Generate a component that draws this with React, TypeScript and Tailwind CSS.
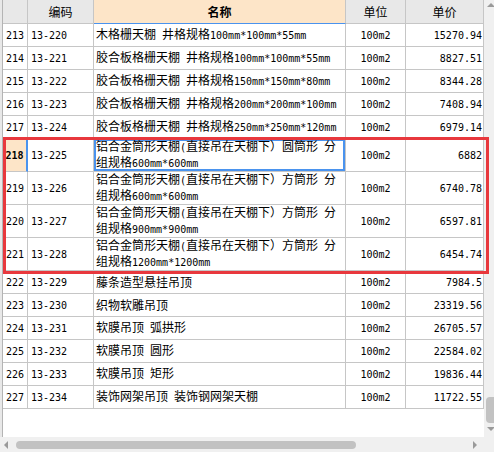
import React from "react";

type Row = {
  no: number;
  code: string;
  name: string[];
  unit: string;
  price: string;
};

const rows: Row[] = [
  { no: 213, code: "13-220", name: ["木格栅天棚 井格规格100mm*100mm*55mm"], unit: "100m2", price: "15270.94" },
  { no: 214, code: "13-221", name: ["胶合板格栅天棚 井格规格100mm*100mm*55mm"], unit: "100m2", price: "8827.51" },
  { no: 215, code: "13-222", name: ["胶合板格栅天棚 井格规格150mm*150mm*80mm"], unit: "100m2", price: "8344.28" },
  { no: 216, code: "13-223", name: ["胶合板格栅天棚 井格规格200mm*200mm*100mm"], unit: "100m2", price: "7408.94" },
  { no: 217, code: "13-224", name: ["胶合板格栅天棚 井格规格250mm*250mm*120mm"], unit: "100m2", price: "6979.14" },
  { no: 218, code: "13-225", name: ["铝合金筒形天棚(直接吊在天棚下）圆筒形 分", "组规格600mm*600mm"], unit: "100m2", price: "6882" },
  { no: 219, code: "13-226", name: ["铝合金筒形天棚(直接吊在天棚下）方筒形 分", "组规格600mm*600mm"], unit: "100m2", price: "6740.78" },
  { no: 220, code: "13-227", name: ["铝合金筒形天棚(直接吊在天棚下）方筒形 分", "组规格900mm*900mm"], unit: "100m2", price: "6597.81" },
  { no: 221, code: "13-228", name: ["铝合金筒形天棚(直接吊在天棚下）方筒形 分", "组规格1200mm*1200mm"], unit: "100m2", price: "6454.74" },
  { no: 222, code: "13-229", name: ["藤条造型悬挂吊顶"], unit: "100m2", price: "7984.5" },
  { no: 223, code: "13-230", name: ["织物软雕吊顶"], unit: "100m2", price: "23319.56" },
  { no: 224, code: "13-231", name: ["软膜吊顶 弧拱形"], unit: "100m2", price: "26705.57" },
  { no: 225, code: "13-232", name: ["软膜吊顶 圆形"], unit: "100m2", price: "22584.02" },
  { no: 226, code: "13-233", name: ["软膜吊顶 矩形"], unit: "100m2", price: "19836.44" },
  { no: 227, code: "13-234", name: ["装饰网架吊顶 装饰钢网架天棚"], unit: "100m2", price: "11722.55" },
];

const SELECTED = 218;

// ascii runs get the narrow mono face so they take half a CJK cell, like the original
function Mixed({ text }: { text: string }) {
  const parts = text.split(/([\x20-\x7e]+)/);
  return (
    <>
      {parts.map((p, i) =>
        i % 2 === 1 ? (
          <span key={i} className="font-['DejaVu_Sans_Mono',monospace] text-[10px] whitespace-pre">
            {p}
          </span>
        ) : (
          <span key={i}>{p}</span>
        )
      )}
    </>
  );
}

function Tri({ dir }: { dir: "up" | "down" | "left" | "right" }) {
  const pts = {
    up: "0,5 4,1 8,5",
    down: "0,1 8,1 4,5",
    left: "5,0 5,8 1,4",
    right: "1,0 1,8 5,4",
  }[dir];
  const vertical = dir === "up" || dir === "down";
  return (
    <svg width={vertical ? 8 : 6} height={vertical ? 6 : 8} viewBox={vertical ? "0 0 8 6" : "0 0 6 8"}>
      <polygon points={pts} fill="#9a9a9a" />
    </svg>
  );
}

export default function App() {
  const mono = "font-['DejaVu_Sans_Mono',monospace] text-[10px]";
  const cjk = "font-['Noto_Sans_CJK_SC',sans-serif] text-[12px]";
  const line = "border-[#c6c6c6]";

  return (
    <div className="relative w-[494px] h-[452px] bg-white text-black overflow-hidden flex flex-col">
      <div className="flex h-[437px]">
        {/* left frame edge */}
        <div className="w-[3px] bg-[#e8e8e8] border-r border-[#b4b4b4]" />

        {/* grid */}
        <div className="w-[481px] flex flex-col">
          <div className={`flex h-[24px] ${cjk}`}>
            <div className={`w-[25px] bg-[#e8e8e8] border-r border-b ${line}`} />
            <div className={`w-[66px] bg-[#e8e8e8] border-r border-b ${line} flex items-center justify-center`}>编码</div>
            <div className={`w-[252px] bg-[#fde5c8] border-r ${line} border-b border-b-[#4a93ee] flex items-center justify-center font-bold`}>
              名称
            </div>
            <div className={`w-[60px] bg-[#e8e8e8] border-r border-b ${line} flex items-center justify-center`}>单位</div>
            <div className={`w-[78px] bg-[#e8e8e8] border-r border-b ${line} flex items-center justify-center`}>单价</div>
          </div>

          {rows.map((r) => {
            const sel = r.no === SELECTED;
            const h = r.name.length > 1 ? "h-[33px]" : "h-[23px]";
            return (
              <div key={r.no} className={`flex ${h}`}>
                <div
                  className={`w-[25px] border-b ${line} flex items-center justify-center ${mono} ${
                    sel ? "bg-[#fde5c8] border-r-2 border-r-[#4a93ee] font-bold" : "border-r"
                  }`}
                >
                  {r.no}
                </div>
                <div className={`w-[66px] border-r border-b ${line} flex items-center pl-[3px] ${mono}`}>{r.code}</div>
                <div
                  className={`w-[252px] border-r border-b ${line} flex flex-col justify-center pl-[2px] ${cjk} leading-[14px] whitespace-nowrap ${
                    sel ? "shadow-[inset_0_0_0_2px_#4a93ee]" : ""
                  }`}
                >
                  {r.name.map((n, i) => (
                    <div key={i}>
                      <Mixed text={n} />
                    </div>
                  ))}
                </div>
                <div className={`w-[60px] border-r border-b ${line} flex items-center justify-center ${mono}`}>{r.unit}</div>
                <div className={`w-[78px] border-r border-b ${line} flex items-center justify-end pr-[1px] ${mono} whitespace-pre`}>
                  {r.price}
                </div>
              </div>
            );
          })}
        </div>

        {/* vertical scrollbar, cut off by the window */}
        <div className="w-[10px] bg-[#f0f0f0] flex flex-col items-end">
          <div className="mt-[2px] mr-[-1px]">
            <Tri dir="up" />
          </div>
          <div className="flex-1" />
          <div className="w-[8px] h-[26px] rounded-l-[4px] bg-[#c2c2c2]" />
          <div className="mt-[3px] mb-[5px] mr-[-1px]">
            <Tri dir="down" />
          </div>
        </div>
      </div>

      {/* horizontal scrollbar */}
      <div className="flex h-[15px]">
        <div className="w-[484px] bg-[#f0f0f0] flex items-center pl-[3px] pr-[6px]">
          <Tri dir="left" />
          <div className="ml-[7px] w-[340px] h-[8px] rounded-full bg-[#c2c2c2]" />
          <div className="flex-1" />
          <Tri dir="right" />
        </div>
        <div className="w-[10px] bg-[#f0f0f0]" />
      </div>

      {/* red annotation box */}
      <div className="absolute left-[3px] top-[137px] w-[486px] h-[137px] border-[3px] border-[#e8383d] pointer-events-none" />
    </div>
  );
}
